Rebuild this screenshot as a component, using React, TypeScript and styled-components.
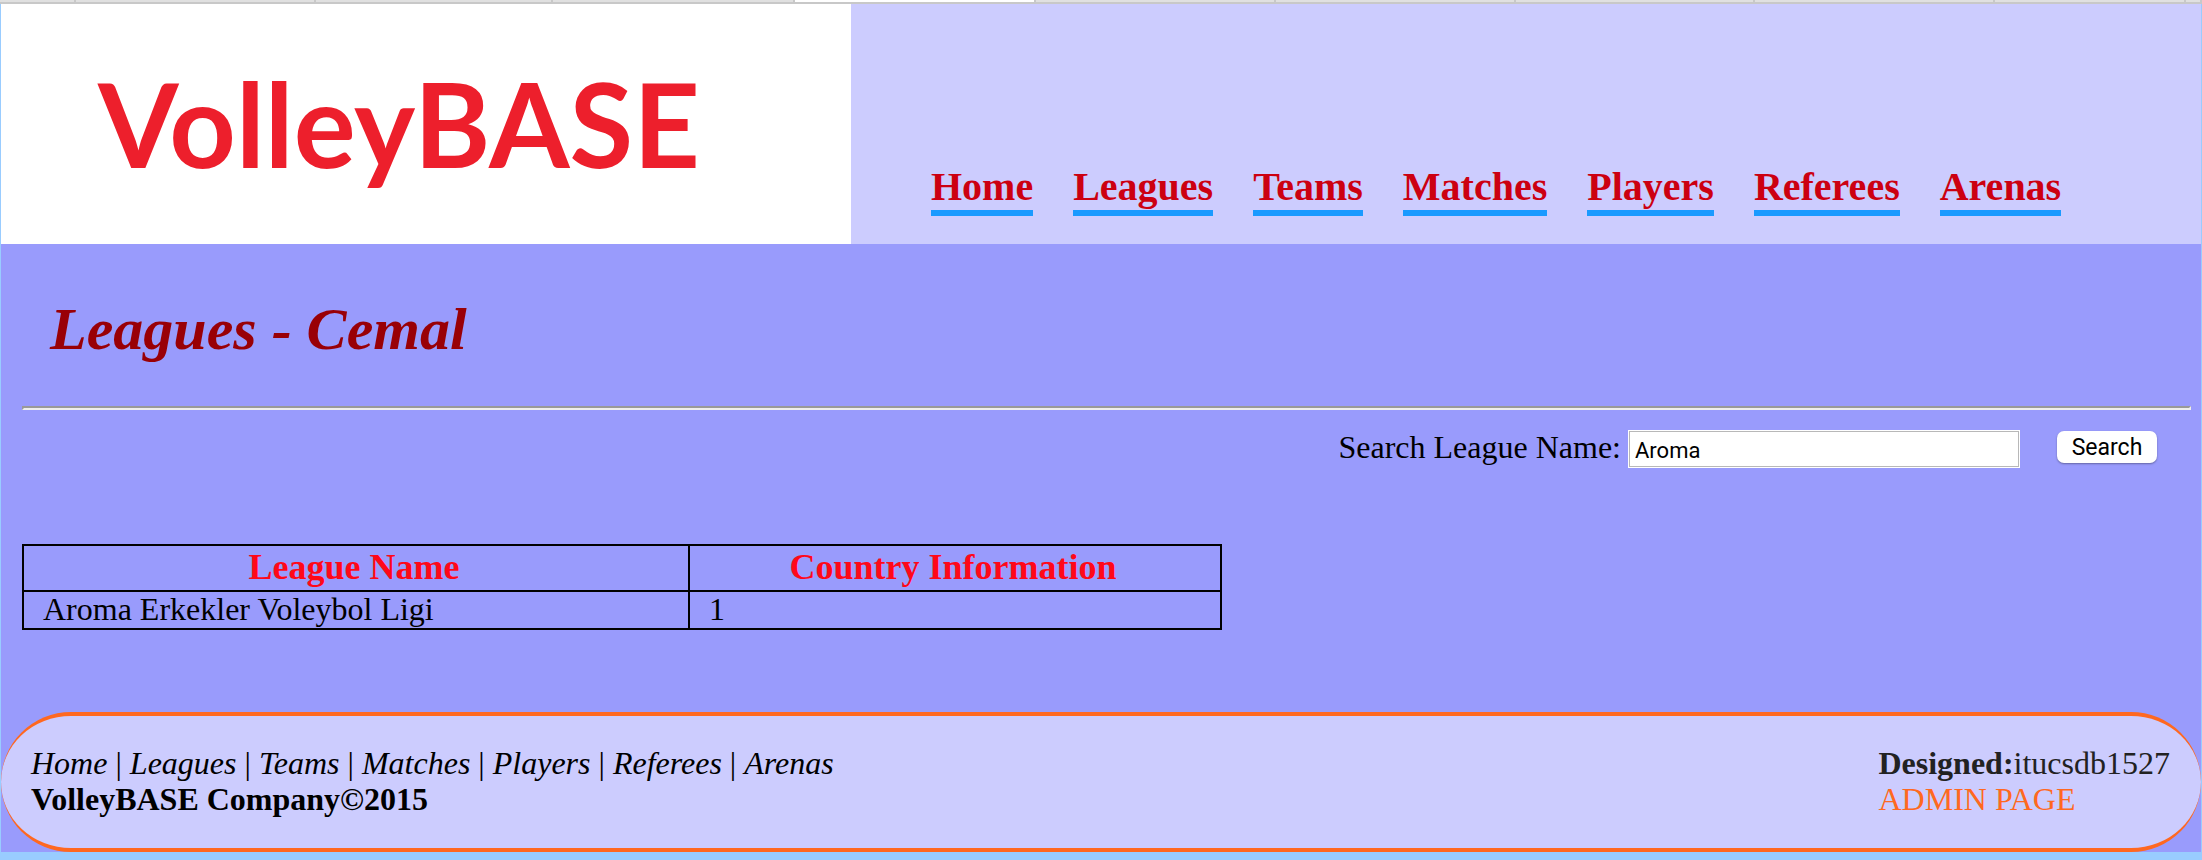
import React from "react";
import styled, { createGlobalStyle } from "styled-components";

const GlobalStyle = createGlobalStyle`
  * { box-sizing: border-box; }
  body {
    margin: 0;
    background: #99ccff;
    color: #000;
    font-family: "Liberation Serif", "Times New Roman", serif;
    font-size: 32px;
    line-height: 36px;
  }
`;

const TabStrip = styled.div`
  display: flex;
  height: 4px;
  background: #e0e0e0;
  border-bottom: 2px solid #c8c8c8;
`;

const Tab = styled.div<{ $weight: number; $active?: boolean }>`
  flex: ${(p) => p.$weight} 1 0;
  border-right: 2px solid #c8c8c8;
  background: ${(p) => (p.$active ? "#fff" : "#e0e0e0")};
`;

const Page = styled.div`
  margin: 0 1px;
  background: #999bfc;
`;

const Header = styled.header`
  display: flex;
  min-height: 240px;
  background: #ccccfe;
`;

const Logo = styled.a`
  flex: 0 0 850px;
  padding: 53px 0 0 97px;
  background: #fff;
  color: #ed1f2c;
  font-family: Lato, sans-serif;
  font-size: 116px;
  font-weight: 700;
  line-height: 134px;
  text-decoration: none;
`;

const MainNav = styled.nav`
  display: flex;
  flex: 1;
  align-items: flex-end;
  gap: 40px;
  padding: 0 0 28px 80px;
`;

const NavLink = styled.a`
  border-bottom: 6px solid #1a9aff;
  color: #cc0011;
  font-size: 40px;
  font-weight: 700;
  line-height: 46px;
  text-decoration: none;
`;

const Content = styled.main`
  padding: 50px 10px 82px 21px;
`;

const Title = styled.h1`
  margin: 0 0 42px 28px;
  color: #990006;
  font-size: 60px;
  font-style: italic;
  font-weight: 700;
  line-height: 70px;
`;

const Rule = styled.hr`
  height: 4px;
  margin: 0;
  border: 2px solid;
  border-color: #999 #eee #eee #999;
`;

const SearchForm = styled.form`
  display: flex;
  justify-content: flex-end;
  align-items: flex-start;
  margin: 20px 34px 76px 0;
`;

const SearchLabel = styled.label`
  line-height: 34px;
`;

const SearchInput = styled.input`
  width: 392px;
  height: 38px;
  margin: 0 37px 0 7px;
  padding: 2px 6px 0;
  border: 1px solid #fff;
  outline: 1px solid #b8b8b8;
  outline-offset: -2px;
  background: #fff;
  color: #000;
  font-family: Roboto, sans-serif;
  font-size: 22px;
`;

const SearchButton = styled.button`
  width: 100px;
  height: 32px;
  margin-top: 1px;
  padding: 0;
  border: 0;
  border-radius: 7px;
  background: #fff;
  box-shadow: 0 1px 2px rgba(0, 0, 0, 0.35);
  color: #000;
  font-family: Roboto, sans-serif;
  font-size: 23px;
  line-height: 34px;
`;

const LeagueTable = styled.table`
  width: 1200px;
  max-width: 100%;
  table-layout: fixed;
  border-collapse: collapse;
`;

const HeadCell = styled.th<{ $width?: string }>`
  width: ${(p) => p.$width ?? "auto"};
  padding: 0 4px 2px 0;
  border: 2px solid #000;
  color: #ff0819;
  font-size: 36px;
  line-height: 42px;
`;

const Cell = styled.td`
  padding: 0 0 2px 19px;
  border: 2px solid #000;
  line-height: 34px;
`;

const Footer = styled.footer`
  display: flex;
  justify-content: space-between;
  padding: 29px 31px 31px 30px;
  border: solid #ff6820;
  border-width: 4px 0;
  border-radius: 70px;
  background: #ccccfe;
`;

const FooterLink = styled.a`
  color: #000;
  font-style: italic;
  text-decoration: none;
`;

const Credits = styled.div`
  color: #222;
`;

const AdminLink = styled.a`
  display: block;
  color: #ff6820;
  text-decoration: none;
`;

const tabs = [75, 240, 238, 242, 241, 241, 240, 240, 240, 191, 14];
const activeTab = 4;
const sections = ["Home", "Leagues", "Teams", "Matches", "Players", "Referees", "Arenas"];
const leagues = [{ name: "Aroma Erkekler Voleybol Ligi", country: 1 }];

export default function App() {
  return (
    <>
      <GlobalStyle />
      <TabStrip>
        {tabs.map((weight, i) => (
          <Tab key={i} $weight={weight} $active={i === activeTab} />
        ))}
      </TabStrip>
      <Page>
        <Header>
          <Logo href="#home">VolleyBASE</Logo>
          <MainNav>
            {sections.map((name) => (
              <NavLink key={name} href={`#${name.toLowerCase()}`}>
                {name}
              </NavLink>
            ))}
          </MainNav>
        </Header>
        <Content>
          <Title>Leagues - Cemal</Title>
          <Rule />
          <SearchForm onSubmit={(e) => e.preventDefault()}>
            <SearchLabel htmlFor="league">Search League Name:</SearchLabel>
            <SearchInput id="league" type="text" defaultValue="Aroma" />
            <SearchButton type="submit">Search</SearchButton>
          </SearchForm>
          <LeagueTable>
            <thead>
              <tr>
                <HeadCell $width="666px">League Name</HeadCell>
                <HeadCell>Country Information</HeadCell>
              </tr>
            </thead>
            <tbody>
              {leagues.map((league) => (
                <tr key={league.name}>
                  <Cell>{league.name}</Cell>
                  <Cell>{league.country}</Cell>
                </tr>
              ))}
            </tbody>
          </LeagueTable>
        </Content>
        <Footer>
          <div>
            <nav>
              {sections.map((name, i) => (
                <React.Fragment key={name}>
                  {i > 0 && " | "}
                  <FooterLink href={`#${name.toLowerCase()}`}>{name}</FooterLink>
                </React.Fragment>
              ))}
            </nav>
            <strong>VolleyBASE Company©2015</strong>
          </div>
          <Credits>
            <strong>Designed:</strong>itucsdb1527
            <AdminLink href="#admin">ADMIN PAGE</AdminLink>
          </Credits>
        </Footer>
      </Page>
    </>
  );
}
